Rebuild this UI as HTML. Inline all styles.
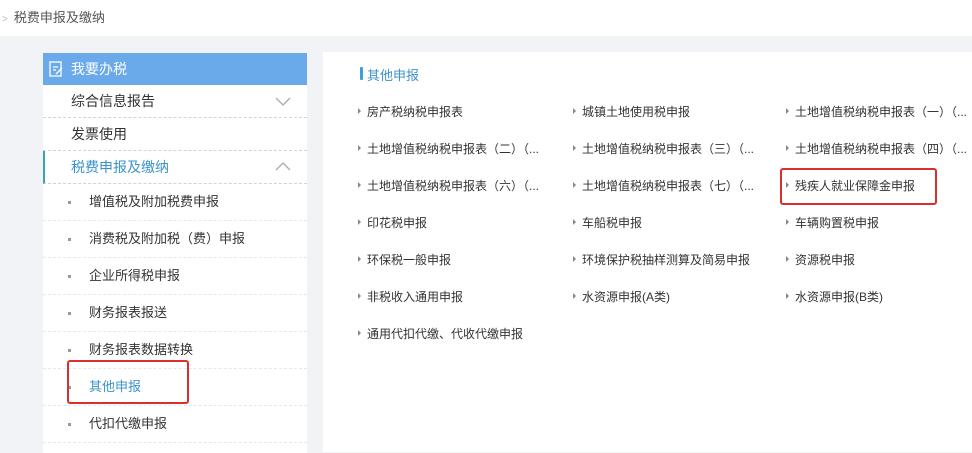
<html><head><style>
body{margin:0;width:972px;height:449px;overflow:hidden;background:#f2f3f7;font-family:"Liberation Sans","Noto Sans CJK SC",sans-serif;position:relative}
.top{position:absolute;left:0;top:0;width:972px;height:36px;background:#fff;font-size:13px;color:#555;line-height:36px}
.left{position:absolute;left:43px;top:53px;width:264px;height:400px;background:#fff}
.hd{height:32px;background:#6aaaea;color:#fff;font-size:14px;line-height:32px;padding-left:28px;position:relative}
.row{height:32px;border-bottom:1px dashed #cfd4dc;font-size:14px;line-height:32px;padding-left:28px;color:#333;position:relative}
.sub{height:36px;border-bottom:1px dashed #e6e8ec;font-size:13px;line-height:36px;padding-left:46px;color:#333;position:relative}
.sub:before{content:"";position:absolute;left:25px;top:17px;width:3px;height:3px;background:#999}
.right{position:absolute;left:323px;top:52px;width:649px;height:400px;background:#fff}
.it{position:absolute;font-size:12px;color:#333;white-space:nowrap}
.it:before{content:"";position:absolute;left:-9px;top:5px;border-left:3px solid #888;border-top:3px solid transparent;border-bottom:3px solid transparent}
.red{position:absolute;border:2px solid #d9302c;border-radius:3px}
</style></head><body>
<div class="top"><span style="color:#bbb;font-size:10px;margin:0 6px 0 2px">&gt;</span>税费申报及缴纳</div>
<div class="left">
<div class="hd"><svg style="position:absolute;left:6px;top:8px" width="14" height="16"><rect x="1" y="1" width="11" height="14" fill="none" stroke="#fff" stroke-width="1.3"/><path d="M4 6h5M4 9h3M7 13l6-6" stroke="#fff" stroke-width="1.3"/></svg>我要办税</div>
<div class="row">综合信息报告<svg style="position:absolute;right:16px;top:12px" width="16" height="9"><path d="M1 1l7 7 7-7" fill="none" stroke="#aaa" stroke-width="1.3"/></svg></div>
<div class="row">发票使用</div>
<div class="row" style="color:#3b93c8;border-left:2px solid #3aa0b5;padding-left:26px">税费申报及缴纳<svg style="position:absolute;right:16px;top:11px" width="16" height="9"><path d="M1 8l7-7 7 7" fill="none" stroke="#aaa" stroke-width="1.3"/></svg></div>
<div class="sub">增值税及附加税费申报</div>
<div class="sub">消费税及附加税（费）申报</div>
<div class="sub">企业所得税申报</div>
<div class="sub">财务报表报送</div>
<div class="sub">财务报表数据转换</div>
<div class="sub" style="color:#3b93c8">其他申报</div>
<div class="sub">代扣代缴申报</div>
</div>
<div class="red" style="left:67px;top:360px;width:118px;height:40px"></div>
<div class="right">
<div style="position:absolute;left:37px;top:15px;width:3px;height:13px;background:#3aa0d8;border-radius:1px"></div>
<div style="position:absolute;left:44px;top:13px;font-size:13px;color:#3b93c8">其他申报</div>
</div>
<div class="it" style="left:367px;top:103px">房产税纳税申报表</div>
<div class="it" style="left:582px;top:103px">城镇土地使用税申报</div>
<div class="it" style="left:795px;top:103px">土地增值税纳税申报表（一）（...</div>
<div class="it" style="left:367px;top:140px">土地增值税纳税申报表（二）（...</div>
<div class="it" style="left:582px;top:140px">土地增值税纳税申报表（三）（...</div>
<div class="it" style="left:795px;top:140px">土地增值税纳税申报表（四）（...</div>
<div class="it" style="left:367px;top:177px">土地增值税纳税申报表（六）（...</div>
<div class="it" style="left:582px;top:177px">土地增值税纳税申报表（七）（...</div>
<div class="it" style="left:795px;top:177px">残疾人就业保障金申报</div>
<div class="it" style="left:367px;top:214px">印花税申报</div>
<div class="it" style="left:582px;top:214px">车船税申报</div>
<div class="it" style="left:795px;top:214px">车辆购置税申报</div>
<div class="it" style="left:367px;top:251px">环保税一般申报</div>
<div class="it" style="left:582px;top:251px">环境保护税抽样测算及简易申报</div>
<div class="it" style="left:795px;top:251px">资源税申报</div>
<div class="it" style="left:367px;top:288px">非税收入通用申报</div>
<div class="it" style="left:582px;top:288px">水资源申报(A类)</div>
<div class="it" style="left:795px;top:288px">水资源申报(B类)</div>
<div class="it" style="left:367px;top:325px">通用代扣代缴、代收代缴申报</div>
<div class="red" style="left:780px;top:168px;width:153px;height:33px"></div>
</body></html>
